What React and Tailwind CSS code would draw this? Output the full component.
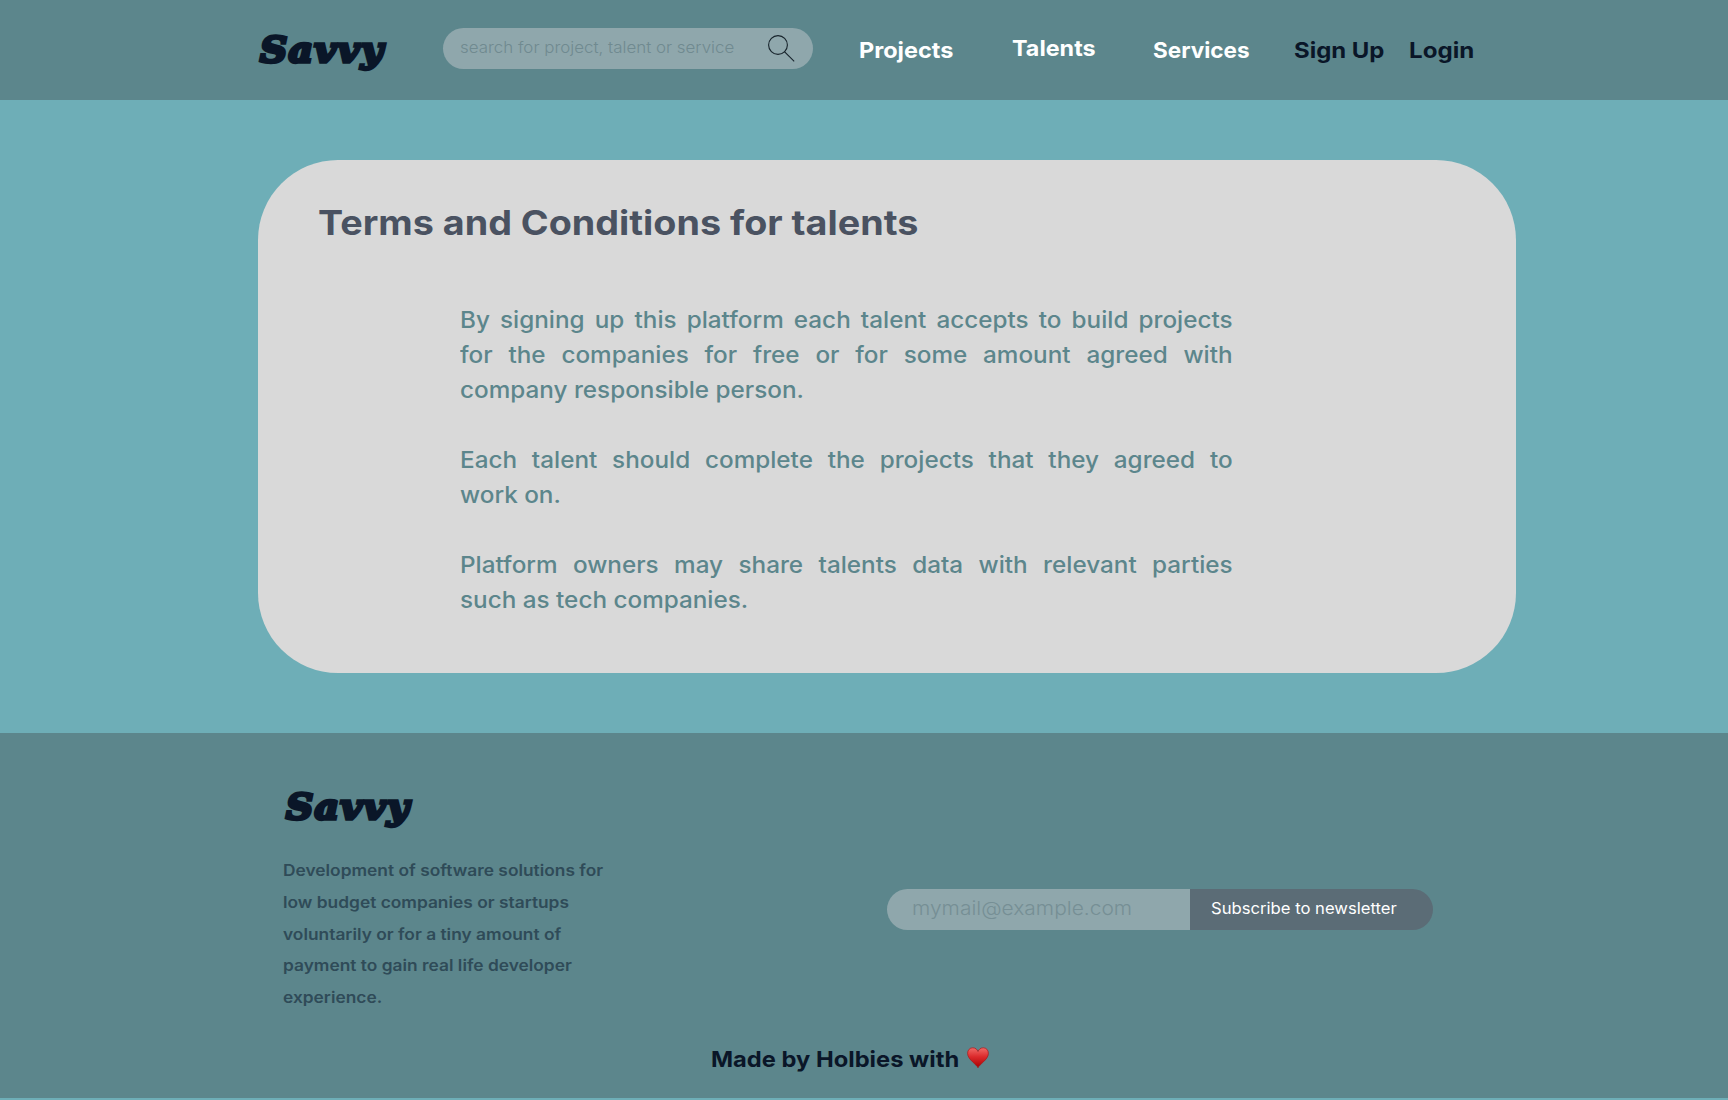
import React from "react";

function Logo({ className }) {
  return (
    <div
      className={`font-['DejaVu_Serif',serif] text-[36px] leading-[48px] font-bold italic tracking-[1.2px] whitespace-nowrap text-[#0a1628] [-webkit-text-stroke:3.4px_#0a1628] [paint-order:stroke_fill] ${className}`}
    >
      <span className="inline-block origin-left scale-x-[1.05]">Savvy</span>
    </div>
  );
}

function SearchIcon() {
  return (
    <svg width="28" height="28" viewBox="0 0 28 28" fill="none" stroke="#17232b" strokeWidth="1.1">
      <circle cx="11" cy="10" r="9.4" />
      <path d="M17.4 16.6 L27.2 26.4" />
    </svg>
  );
}

function Heart() {
  return (
    <svg className="-mt-[3px]" width="22" height="22" viewBox="0 0 22 22">
      <defs>
        <linearGradient id="heart" x1="0" y1="0" x2="0" y2="1">
          <stop offset="0" stopColor="#f06a66" />
          <stop offset="0.45" stopColor="#dc2a2c" />
          <stop offset="1" stopColor="#a80000" />
        </linearGradient>
      </defs>
      <path
        d="M11 20.8 C10 17.6 0.6 12.6 0.6 6.4 C0.6 2.9 2.9 0.8 5.7 0.8 C8.3 0.8 10.2 2.3 11 4.5 C11.8 2.3 13.7 0.8 16.3 0.8 C19.1 0.8 21.4 2.9 21.4 6.4 C21.4 12.6 12 17.6 11 20.8 Z"
        fill="url(#heart)"
        stroke="#a3181b"
        strokeWidth="0.7"
      />
    </svg>
  );
}

const paragraphs = [
  [
    "By signing up this platform each talent accepts to build projects",
    "for the companies for free or for some amount agreed with",
    "company responsible person.",
  ],
  ["Each talent should complete the projects that they agreed to", "work on."],
  [
    "Platform owners may share talents data with relevant parties",
    "such as tech companies.",
  ],
];

export default function App() {
  return (
    <div className="flex h-[1100px] w-[1728px] flex-col overflow-hidden bg-[#6eaeb7] font-['Inter',sans-serif]">
      <header className="flex h-[100px] items-center bg-[#5c868c] pl-[258px] text-[22px] leading-8 font-bold whitespace-nowrap">
        <Logo className="-mt-0.5 w-[185px] pl-[2px]" />
        <div className="mb-[3px] flex h-[41px] w-[370px] items-center rounded-full bg-[#8fa7ac] pl-[17px]">
          <div className="mb-[3px] w-[307px] text-[16px] font-light text-[#708a90]">
            <span className="inline-block origin-left scale-x-[1.057]">
              search for project, talent or service
            </span>
          </div>
          <SearchIcon />
        </div>
        <nav className="flex items-center text-white">
          <a className="ml-[46px] w-[153px]">
            <span className="inline-block origin-left scale-x-[1.067]">Projects</span>
          </a>
          <a className="w-[141px] pb-1">
            <span className="inline-block origin-left scale-x-[1.06]">Talents</span>
          </a>
          <a className="w-[141px]">
            <span className="inline-block origin-left scale-x-[1.023]">Services</span>
          </a>
        </nav>
        <a className="w-[115px] text-[#0a1628]">
          <span className="inline-block origin-left scale-x-[1.088]">Sign Up</span>
        </a>
        <a className="text-[#0a1628]">
          <span className="inline-block origin-left scale-x-[1.097]">Login</span>
        </a>
      </header>

      <main className="h-[633px] pt-[60px] pl-[258px]">
        <section className="h-[513px] w-[1258px] rounded-[80px] bg-[#d9d9d9] pt-[43px]">
          <h1 className="ml-[60px] w-fit origin-left scale-x-[1.109] text-[34px] leading-10 font-bold text-[#4a5261]">
            Terms and Conditions for talents
          </h1>
          <div className="mt-[60px] ml-[202px] flex w-[732px] origin-left scale-x-[1.0555] flex-col gap-[35px] text-[23px] leading-[35px] font-medium text-[#5c868c]">
            {paragraphs.map((lines) => (
              <div key={lines[0]}>
                {lines.map((line, i) => (
                  <p
                    key={line}
                    className={
                      i < lines.length - 1
                        ? "whitespace-nowrap [text-align-last:justify]"
                        : "whitespace-nowrap"
                    }
                  >
                    {line}
                  </p>
                ))}
              </div>
            ))}
          </div>
        </section>
      </main>

      <footer className="h-[365px] bg-[#5c868c] pt-[49px]">
        <div className="flex h-[261px] pl-[283px]">
          <div className="w-[604px]">
            <Logo className="pl-[3px]" />
            <p className="mt-[25px] w-fit origin-left scale-x-[1.119] text-[15.5px] leading-[31.75px] font-semibold whitespace-nowrap text-[#2f4b58]">
              Development of software solutions for
              <br />
              low budget companies or startups
              <br />
              voluntarily or for a tiny amount of
              <br />
              payment to gain real life developer
              <br />
              experience.
            </p>
          </div>
          <div className="mt-[107px] flex h-[41px] w-[546px] overflow-hidden rounded-full leading-[39px] whitespace-nowrap">
            <div className="w-[303px] bg-[#8fa7ac] pl-[25px] text-[19px] font-light text-[#768f95]">
              <span className="inline-block origin-left scale-x-[1.103]">mymail@example.com</span>
            </div>
            <div className="flex-1 bg-[#5b6c76] pl-[21px] text-[15.5px] text-white">
              <span className="inline-block origin-left scale-x-[1.074]">
                Subscribe to newsletter
              </span>
            </div>
          </div>
        </div>
        <div className="flex items-center pl-[711px] text-[22px] leading-8 font-bold text-[#0a1628]">
          <div className="w-[256px]">
            <span className="inline-block origin-left scale-x-[1.078] whitespace-nowrap">
              Made by Holbies with
            </span>
          </div>
          <Heart />
        </div>
      </footer>
    </div>
  );
}
